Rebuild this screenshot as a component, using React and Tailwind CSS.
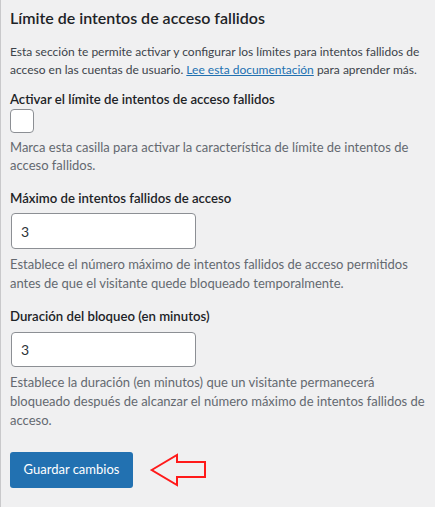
import React, { useState } from 'react';

const font = { fontFamily: 'Lato, "Noto Sans", sans-serif' };

function ArrowMark() {
  return (
    <svg width="58" height="34" viewBox="0 0 58 34" className="ml-[16px] shrink-0">
      <polygon
        points="2.7,17 28,2 28,9 56,9 56,24 28,24 28,32"
        fill="none"
        stroke="#ff1a1a"
        strokeWidth="2"
        strokeLinejoin="miter"
      />
    </svg>
  );
}

export default function App() {
  const [enabled, setEnabled] = useState(false);
  const [maxAttempts, setMaxAttempts] = useState('3');
  const [lockout, setLockout] = useState('3');

  return (
    <div style={font} className="min-h-[507px] w-[435px] bg-[#f0f0f1] border-l border-[#c9c9cb] pl-[9px] pr-[8px] pt-[6px] text-[12px] text-[#3c434a]">
      <h2 className="text-[16px] leading-6 font-semibold text-[#1d2327]">
        Límite de intentos de acceso fallidos
      </h2>
      <p className="mt-[13px] leading-[18px]">
        Esta sección te permite activar y configurar los límites para intentos fallidos de acceso en las cuentas de usuario.{' '}
        <a href="#" className="text-[#2271b1] underline">Lee esta documentación</a> para aprender más.
      </p>

      {/* Activar */}
      <div className="mt-[10px]">
        <label className="block text-[13.2px] leading-5 font-semibold text-[#1d2327]">
          Activar el límite de intentos de acceso fallidos
        </label>
        <button
          type="button"
          onClick={() => setEnabled(!enabled)}
          className="block w-[24px] h-[24px] bg-white border border-[#8c8f94] rounded-[4px]"
        >
          {enabled && <span className="text-[#2271b1] text-[16px] leading-none">✓</span>}
        </button>
        <p className="mt-[5px] text-[13px] leading-[18px] text-[#646970]">
          Marca esta casilla para activar la característica de límite de intentos de acceso fallidos.
        </p>
      </div>

      {/* Maximo */}
      <div className="mt-[14px]">
        <label className="block text-[13.2px] leading-5 font-semibold text-[#1d2327]">
          Máximo de intentos fallidos de acceso
        </label>
        <input
          value={maxAttempts}
          onChange={(e) => setMaxAttempts(e.target.value)}
          className="mt-[5px] ml-[1px] block w-[185px] h-[36px] bg-white border border-[#8c8f94] rounded-[4px] pl-[9px] text-[14px] text-[#2c3338] outline-none"
        />
        <p className="mt-[6px] text-[13px] leading-[19px] text-[#646970]">
          Establece el número máximo de intentos fallidos de acceso permitidos antes de que el visitante quede bloqueado temporalmente.
        </p>
      </div>

      {/* Duracion */}
      <div className="mt-[13px]">
        <label className="block text-[13.2px] leading-5 font-semibold text-[#1d2327]">
          Duración del bloqueo (en minutos)
        </label>
        <input
          value={lockout}
          onChange={(e) => setLockout(e.target.value)}
          className="mt-[6px] ml-[1px] block w-[185px] h-[35px] bg-white border border-[#8c8f94] rounded-[4px] pl-[9px] text-[14px] text-[#2c3338] outline-none"
        />
        <p className="mt-[6px] text-[13px] leading-[19px] text-[#646970]">
          Establece la duración (en minutos) que un visitante permanecerá bloqueado después de alcanzar el número máximo de intentos fallidos de acceso.
        </p>
      </div>

      <div className="mt-[22px] flex items-center">
        <button
          type="button"
          className="w-[123px] h-[36px] bg-[#2271b1] text-white text-[13px] rounded-[3px]"
        >
          Guardar cambios
        </button>
        <ArrowMark />
      </div>
    </div>
  );
}
